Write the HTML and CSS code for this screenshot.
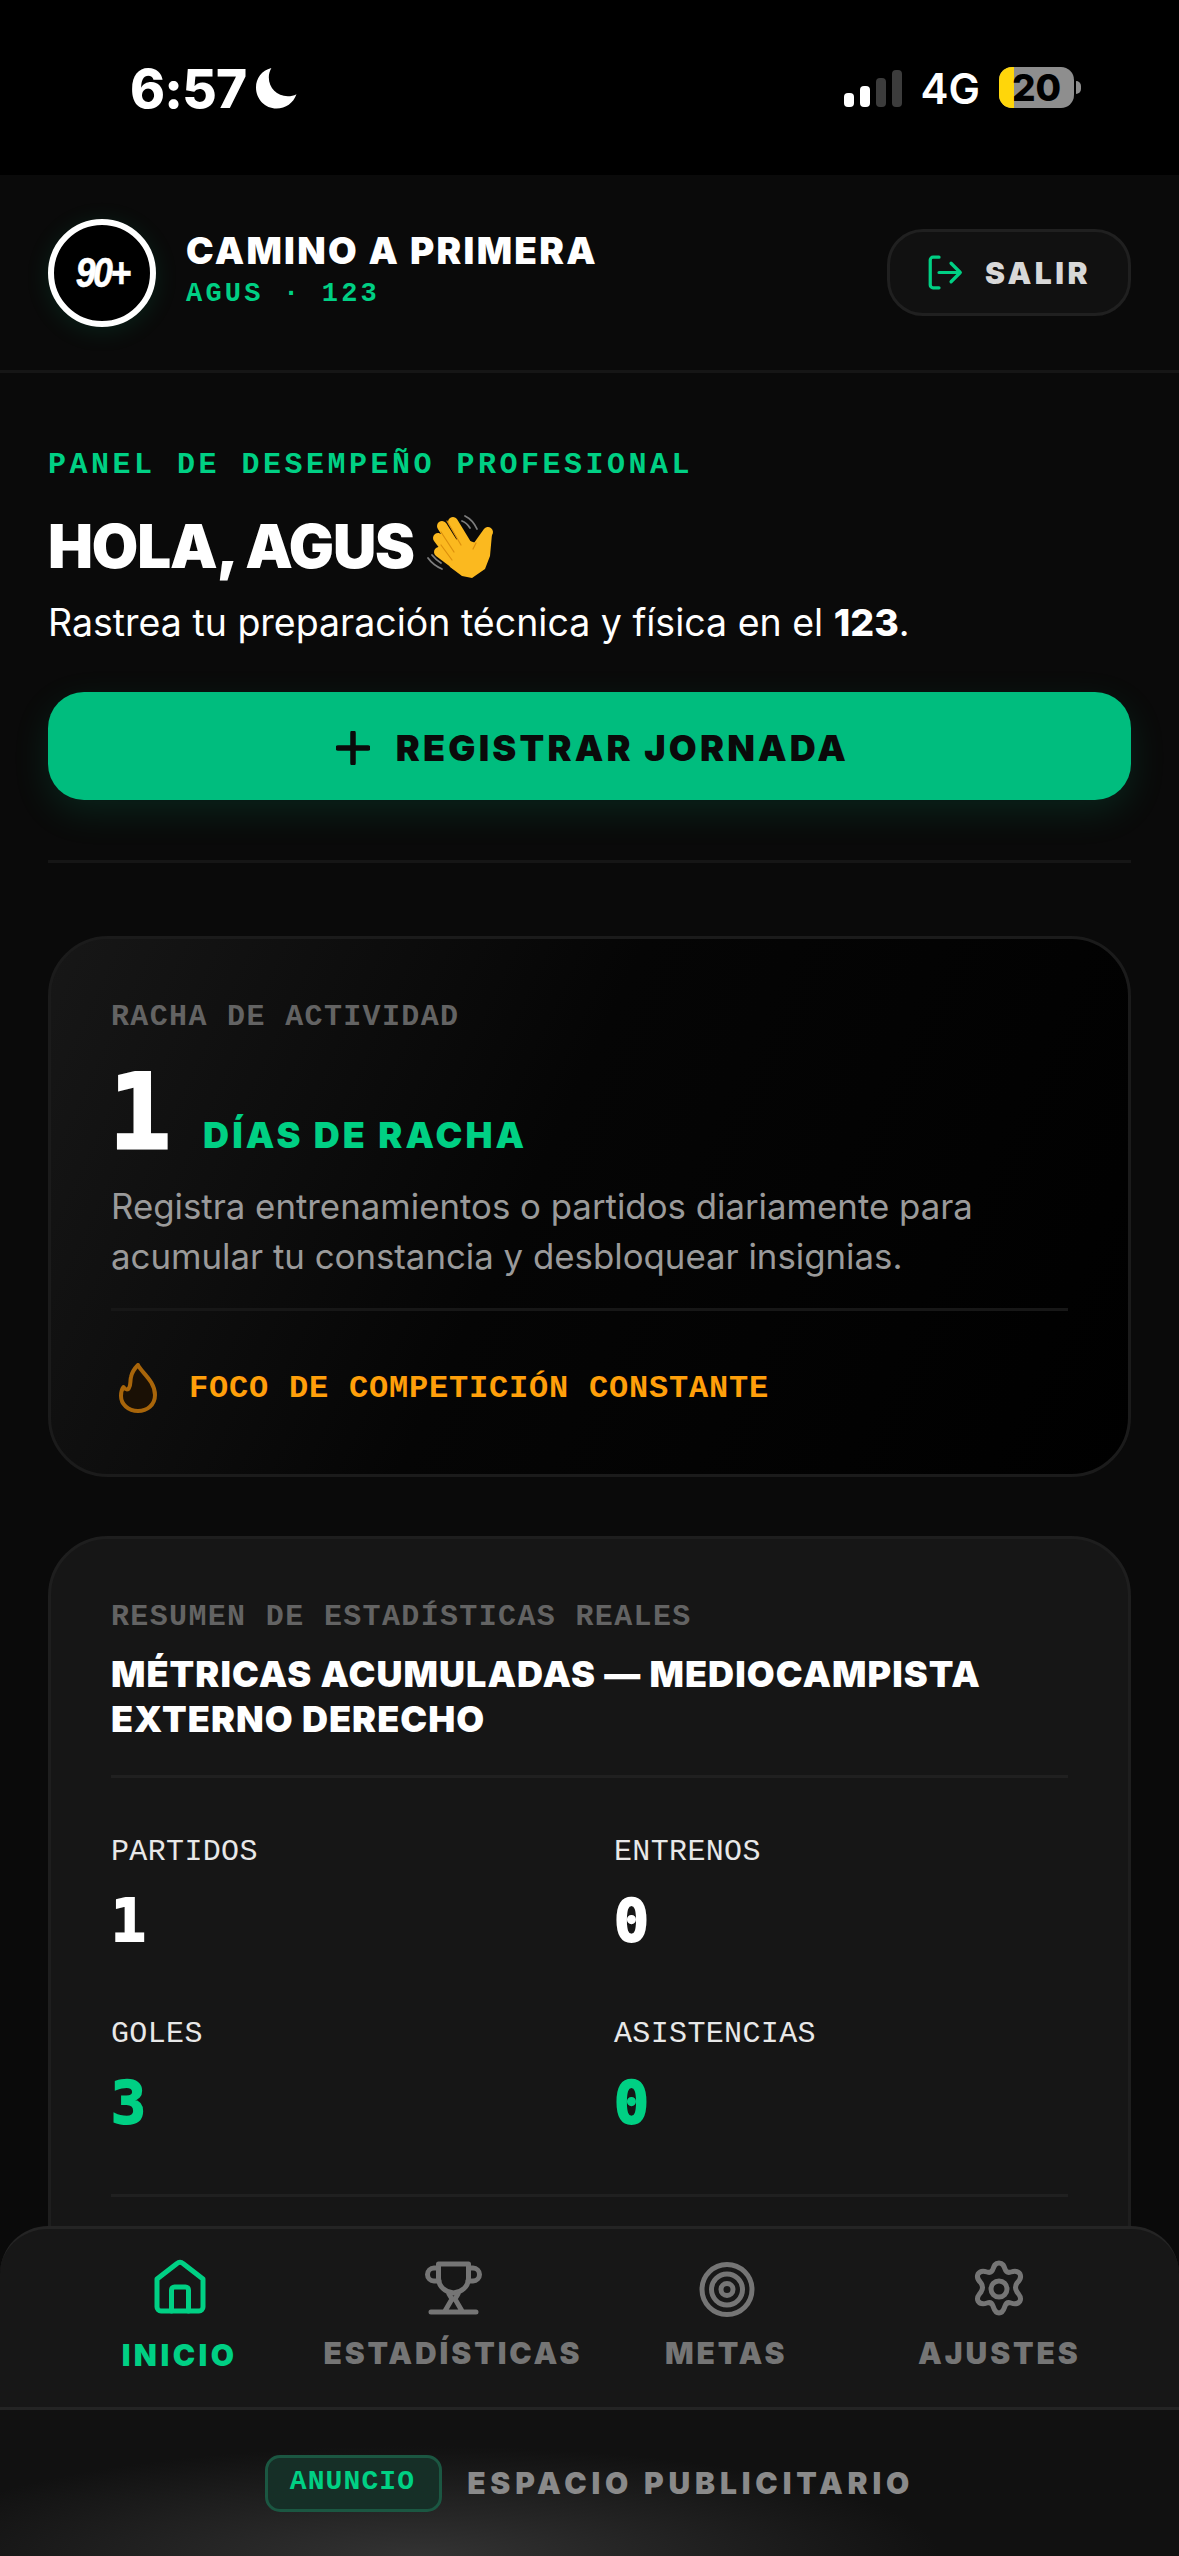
FILE: index.html
```html
<!DOCTYPE html>
<html lang="es">
<head>
    <meta charset="UTF-8">
    <meta name="viewport" content="width=device-width, initial-scale=1.0">
    <title>Camino a Primera</title>
    <link rel="stylesheet" href="styles.css">
</head>
<body>
    <div class="screen">
        <div class="status-bar">
            <div class="status-left">
                <span class="clock">6:57</span>
                <svg class="moon" viewBox="0 0 40 40"><path d="M15 0.500C5.500 3 0 10.500 0 19.500 0 31 9 40 20 40c9 0 16.500-5.500 19.500-14-2.500 1.300-5.500 2-8.500 2C20.500 28 12.500 20 12.500 9.500c0-3.200.900-6.200 2.500-9z"/></svg>
            </div>
            <div class="status-right">
                <div class="signal">
                    <span class="bar bar-1"></span>
                    <span class="bar bar-2"></span>
                    <span class="bar bar-3"></span>
                    <span class="bar bar-4"></span>
                </div>
                <span class="network">4G</span>
                <div class="battery">
                    <span class="battery-fill"></span>
                    <span class="battery-level">20</span>
                </div>
                <span class="battery-nub"></span>
            </div>
        </div>

        <header class="topbar">
            <div class="brand">
                <div class="logo"><span class="logo-text">90+</span></div>
                <div>
                    <div class="brand-title">CAMINO A PRIMERA</div>
                    <div class="brand-sub">AGUS · 123</div>
                </div>
            </div>
            <button class="logout">
                <svg viewBox="0 0 40 40" class="logout-icon"><path d="M13 3.500H6.500a3 3 0 0 0-3 3v27a3 3 0 0 0 3 3H13M13 20h23M26 10l10 10-10 10"/></svg>
                <span>SALIR</span>
            </button>
        </header>

        <main class="content">
            <section class="hero">
                <div class="eyebrow">PANEL DE DESEMPEÑO PROFESIONAL</div>
                <h1 class="greeting">HOLA, AGUS
                    <svg class="wave" viewBox="14 8 72 74">
                        <g fill="none" stroke="#7d7d7d" stroke-width="1.800" stroke-linecap="round">
                            <path d="M55 15q8 4 12 13M52 20q5 2 8 7M18 57q5 7 14 11M22 54q4 5 9 8"/>
                        </g>
                        <g stroke="#fbb91f" stroke-width="10" stroke-linecap="round">
                            <path d="M43 21l14 23M32 25l15 24M28 37l15 20M29 51l16 12M78 31l-10 14"/>
                        </g>
                        <path fill="#fbb91f" d="M48 36l18 6 8-12 8 3-2 22-5 13-13 9-10-2-12-9-4-11z"/>
                        <path fill="none" stroke="#dc8f0c" stroke-width="1.200" stroke-linecap="round" d="M37 20l14 24M31 31l13 20M31 44l11 15M66 42l-3 6"/>
                    </svg>
                </h1>
                <p class="hero-text">Rastrea tu preparación técnica y física en el <b>123</b>.</p>
                <button class="primary-btn">
                    <svg viewBox="0 0 34 34" class="plus"><path d="M17 2v30M2 17h30"/></svg>
                    <span>REGISTRAR JORNADA</span>
                </button>
            </section>

            <section class="card streak-card">
                <div class="card-label">RACHA DE ACTIVIDAD</div>
                <div class="streak-row">
                    <span class="streak-num">1</span>
                    <span class="streak-unit">DÍAS DE RACHA</span>
                </div>
                <p class="streak-text">Registra entrenamientos o partidos diariamente para acumular tu constancia y desbloquear insignias.</p>
                <div class="streak-foot">
                    <svg class="flame" viewBox="0 0 40 50"><path d="M20 2C23 9 37 18 37 32 37 42 29 48 20 48 10 48 3 41 3 33c0-4 1-7 2.500-9C7 27 10 27 11 25c2-3 1-7 2-11 1-5 4-9 7-12z"/></svg>
                    <span>FOCO DE COMPETICIÓN CONSTANTE</span>
                </div>
            </section>

            <section class="card stats-card">
                <div class="card-label">RESUMEN DE ESTADÍSTICAS REALES</div>
                <h2 class="stats-title">MÉTRICAS ACUMULADAS — MEDIOCAMPISTA EXTERNO DERECHO</h2>
                <div class="stats-grid">
                    <div class="stat">
                        <div class="stat-label">PARTIDOS</div>
                        <div class="stat-value">1</div>
                    </div>
                    <div class="stat">
                        <div class="stat-label">ENTRENOS</div>
                        <div class="stat-value">0</div>
                    </div>
                    <div class="stat">
                        <div class="stat-label">GOLES</div>
                        <div class="stat-value green">3</div>
                    </div>
                    <div class="stat">
                        <div class="stat-label">ASISTENCIAS</div>
                        <div class="stat-value green">0</div>
                    </div>
                </div>
            </section>
        </main>

        <div class="dock">
            <nav class="tabs">
                <a class="tab active">
                    <svg viewBox="0 0 60 60"><path d="M7 20L27 4.500a4.500 4.500 0 0 1 6 0L53 20v28a4 4 0 0 1-4 4H11a4 4 0 0 1-4-4z"/><path d="M21.500 52V31a3 3 0 0 1 3-3h11a3 3 0 0 1 3 3v21"/></svg>
                    <span>INICIO</span>
                </a>
                <a class="tab">
                    <svg viewBox="0 0 60 60"><path d="M15.500 5h30v14c0 9-7 14-15 15-8-1-15-6-15-15z"/><path d="M15.500 9H11a6.500 6.500 0 0 0 0 13h5M45.500 9H50a6.500 6.500 0 0 1 0 13h-5"/><path d="M26 35l3 5-7 12M35 35l-3 5 7 12M8 53h45"/></svg>
                    <span>ESTADÍSTICAS</span>
                </a>
                <a class="tab">
                    <svg viewBox="0 0 60 60"><circle cx="31" cy="30.500" r="25"/><circle cx="31" cy="30.500" r="15.500"/><circle cx="31" cy="30.500" r="6"/></svg>
                    <span>METAS</span>
                </a>
                <a class="tab">
                    <svg viewBox="0 0 60 60"><path d="M30 4c4 0 5 3 6 6 1 3 3 4 6 3 3-1 7-1 9 2 2 4-1 7-3 9-2 3-2 6 0 9s5 5 3 9c-2 3-6 3-9 2-3-1-5 0-6 3s-2 7-6 7-5-4-6-7-3-4-6-3c-3 1-7 1-9-2-2-4 1-6 3-9s2-6 0-9c-2-2-5-5-3-9 2-3 6-3 9-2 3 1 5 0 6-3s2-6 6-6z"/><circle cx="30" cy="30" r="8"/></svg>
                    <span>AJUSTES</span>
                </a>
            </nav>
            <div class="ad-bar">
                <span class="ad-badge">ANUNCIO</span>
                <span class="ad-text">ESPACIO PUBLICITARIO</span>
            </div>
        </div>
    </div>
</body>
</html>
```

FILE: styles.css
```css
* {
    box-sizing: border-box;
}
html, body {
    margin: 0;
    padding: 0;
    background-color: #0a0a0a;
}
body {
    font-family: Inter, "Noto Sans", sans-serif;
    color: #fff;
}
.screen {
    position: relative;
    width: 1179px;
    height: 2556px;
    overflow: hidden;
    background-color: #0a0a0a;
}

/* status bar */
.status-bar {
    height: 175px;
    background-color: #000;
    display: flex;
    justify-content: space-between;
    padding: 67px 98px 0 130px;
}
.status-left {
    display: flex;
    align-items: flex-start;
    gap: 10px;
}
.clock {
    font-size: 53px;
    font-weight: 800;
    line-height: 44px;
    letter-spacing: -0.8px;
}
.moon {
    width: 41px;
    height: 42px;
    fill: #fff;
}
.status-right {
    display: flex;
    align-items: flex-start;
    height: 41px;
}
.signal {
    display: flex;
    align-items: flex-end;
    gap: 6px;
    height: 38px;
    margin-top: 2px;
}
.bar {
    width: 10px;
    border-radius: 4px;
    background-color: #fff;
}
.bar-1 { height: 14px; }
.bar-2 { height: 21px; }
.bar-3 { height: 29px; background-color: #3c3c3c; }
.bar-4 { height: 37px; background-color: #3c3c3c; }
.network {
    font-size: 42px;
    font-weight: 600;
    line-height: 43px;
    margin-left: 19px;
}
.battery {
    position: relative;
    width: 75px;
    height: 41px;
    margin-left: 19px;
    border-radius: 13px;
    background-color: #8e8e8e;
    color: #000;
    text-align: center;
}
.battery-fill {
    position: absolute;
    left: 0;
    top: 0;
    bottom: 0;
    width: 15px;
    border-radius: 13px 0 0 13px;
    background-color: #ffd60a;
}
.battery-level {
    position: relative;
    display: block;
    font-size: 37px;
    font-weight: 800;
    line-height: 41px;
}
.battery-nub {
    width: 5px;
    height: 13px;
    margin: 14px 0 0 2px;
    border-radius: 0 5px 5px 0;
    background-color: #8e8e8e;
}

/* top bar */
.topbar {
    height: 198px;
    padding: 0 48px 0 48px;
    border-bottom: 3px solid #161616;
    display: flex;
    align-items: center;
    justify-content: space-between;
}
.brand {
    display: flex;
    align-items: center;
    gap: 30px;
}
.logo {
    width: 108px;
    height: 108px;
    border: 6px solid #fff;
    border-radius: 50%;
    background-color: #000;
    box-shadow: 0 4px 24px rgba(0, 208, 132, 0.12);
    display: flex;
    align-items: center;
    justify-content: center;
    font-family: "Liberation Sans", sans-serif;
    font-size: 42px;
    font-weight: 700;
    font-style: italic;
    letter-spacing: -3px;
}
.logo-text {
    display: inline-block;
    transform: scaleX(0.85);
    -webkit-text-stroke: 0.6px #fff;
}
.brand-title {
    margin-top: -7px;
    font-size: 37px;
    font-weight: 900;
    line-height: 44px;
    letter-spacing: 2.3px;
}
.brand-sub {
    margin-top: 6px;
    font-family: "Liberation Mono", monospace;
    font-size: 27px;
    font-weight: 700;
    line-height: 30px;
    letter-spacing: 3.2px;
    color: #00d084;
}
.logout {
    width: 244px;
    height: 87px;
    border: 3px solid #202020;
    border-radius: 36px;
    background-color: #111;
    color: #d8d8d8;
    font-family: inherit;
    font-size: 30px;
    font-weight: 900;
    letter-spacing: 3.5px;
    display: flex;
    align-items: center;
    justify-content: center;
    gap: 21px;
}
.logout-icon {
    width: 37px;
    height: 37px;
    fill: none;
    stroke: #00d084;
    stroke-width: 3.5;
    stroke-linecap: round;
    stroke-linejoin: round;
}

/* main */
.content {
    padding: 0 48px;
}
.hero {
    padding-top: 75px;
    padding-bottom: 60px;
    border-bottom: 3px solid #161616;
}
.eyebrow {
    font-family: "Liberation Mono", monospace;
    font-size: 30px;
    font-weight: 700;
    line-height: 34px;
    letter-spacing: 3.5px;
    color: #00d084;
}
.greeting {
    margin: 22px 0 0;
    height: 84px;
    font-size: 60px;
    font-weight: 900;
    line-height: 84px;
    letter-spacing: -1.15px;
    display: flex;
    align-items: center;
    gap: 10px;
}
.wave {
    width: 72px;
    height: 74px;
}
.hero-text {
    margin: 11px 0 0;
    font-size: 37.5px;
    line-height: 48px;
}
.hero-text b {
    font-weight: 800;
}
.primary-btn {
    width: 100%;
    height: 108px;
    margin-top: 45px;
    padding: 3px 0 0 6px;
    border: 0;
    border-radius: 36px;
    background-color: #00bd7e;
    box-shadow: 0 12px 36px rgba(0, 189, 126, 0.14);
    color: #0a0a0a;
    font-family: inherit;
    font-size: 36px;
    font-weight: 900;
    letter-spacing: 3.2px;
    display: flex;
    align-items: center;
    justify-content: center;
    gap: 26px;
}
.plus {
    width: 34px;
    height: 34px;
    fill: none;
    stroke: #0a0a0a;
    stroke-width: 5.5;
    stroke-linecap: round;
}

/* cards */
.card {
    border: 3px solid #1b1b1b;
    border-radius: 60px;
    padding: 61px 60px 0;
}
.card-label {
    font-family: "Liberation Mono", monospace;
    font-size: 30px;
    font-weight: 700;
    line-height: 34px;
    letter-spacing: 1.35px;
    color: #636363;
}
.streak-card {
    height: 541px;
    margin-top: 73px;
    background: linear-gradient(115deg, #171717 0%, #050505 45%, #000 100%);
}
.streak-row {
    display: flex;
    align-items: baseline;
    gap: 32px;
    height: 108px;
    margin-top: 24px;
}
.streak-num {
    margin-left: -2px;
    font-family: "DejaVu Sans Mono", monospace;
    font-size: 103px;
    font-weight: 700;
    line-height: 108px;
    -webkit-text-stroke: 3px #fff;
}
.streak-unit {
    font-size: 36px;
    font-weight: 900;
    letter-spacing: 3.1px;
    color: #00d084;
}
.streak-text {
    margin: 15px 0 0;
    font-size: 34.8px;
    line-height: 50px;
    color: #9a9a9a;
}
.streak-foot {
    margin-top: 27px;
    padding-top: 52px;
    border-top: 3px solid #171717;
    display: flex;
    align-items: center;
    gap: 31px;
    font-family: "Liberation Mono", monospace;
    font-size: 32px;
    font-weight: 700;
    letter-spacing: 0.8px;
    color: #ff9f0a;
}
.flame {
    width: 40px;
    height: 50px;
    margin-left: 7px;
    fill: #1a1005;
    stroke: #a8650a;
    stroke-width: 4;
    stroke-linejoin: round;
}
.stats-card {
    height: 900px;
    margin-top: 59px;
    background-color: #161616;
    border-color: #1e1e1e;
}
.stats-title {
    margin: 18px 0 0;
    font-size: 36px;
    font-weight: 900;
    line-height: 45px;
    letter-spacing: 1.05px;
    padding-bottom: 33px;
    border-bottom: 3px solid #202020;
}
.stats-grid {
    margin-top: 57px;
    padding-bottom: 63px;
    border-bottom: 3px solid #202020;
    display: grid;
    grid-template-columns: 503px 1fr;
    row-gap: 68px;
}
.stat-label {
    font-family: "Liberation Mono", monospace;
    font-size: 30px;
    line-height: 34px;
    letter-spacing: 0.35px;
    color: #e8e8e8;
}
.stat-value {
    margin-top: 24px;
    font-family: "DejaVu Sans Mono", monospace;
    font-size: 58px;
    font-weight: 700;
    line-height: 56px;
    -webkit-text-stroke: 2px currentColor;
}
.green {
    color: #00d084;
}

/* bottom dock */
.dock {
    position: absolute;
    left: 0;
    right: 0;
    bottom: 0;
    height: 330px;
    border-radius: 48px 48px 0 0;
    border-top: 3px solid #242424;
    background-color: #171717;
    overflow: hidden;
}
.tabs {
    height: 181px;
    padding: 30px 43px 0;
    display: grid;
    grid-template-columns: repeat(4, 1fr);
    border-bottom: 3px solid #242424;
}
.tab {
    display: flex;
    flex-direction: column;
    align-items: center;
    gap: 18px;
    color: #757575;
    font-size: 30px;
    font-weight: 900;
    line-height: 32px;
    letter-spacing: 2.9px;
}
.tab svg {
    width: 60px;
    height: 60px;
    fill: none;
    stroke: #757575;
    stroke-width: 5;
    stroke-linecap: round;
    stroke-linejoin: round;
}
.tab.active {
    color: #00d084;
    letter-spacing: 3.5px;
}
.tab.active span {
    margin-top: 2px;
}
.tab.active svg {
    stroke: #00d084;
}
.ad-bar {
    height: 146px;
    padding-top: 45px;
    display: flex;
    align-items: flex-start;
    justify-content: center;
    gap: 25px;
    background:
        radial-gradient(ellipse 520px 110px at 420px 146px, #333 0%, rgba(51, 51, 51, 0) 100%),
        #111;
}
.ad-badge {
    height: 57px;
    padding: 0 24px 0 22px;
    border: 3px solid #1b5742;
    border-radius: 15px;
    background-color: #162f27;
    color: #00d084;
    font-family: "Liberation Mono", monospace;
    font-size: 28px;
    font-weight: 700;
    line-height: 47px;
    letter-spacing: 1.1px;
}
.ad-text {
    height: 57px;
    font-size: 30px;
    font-weight: 900;
    line-height: 57px;
    letter-spacing: 4.85px;
    color: #8a8a8a;
}
```
